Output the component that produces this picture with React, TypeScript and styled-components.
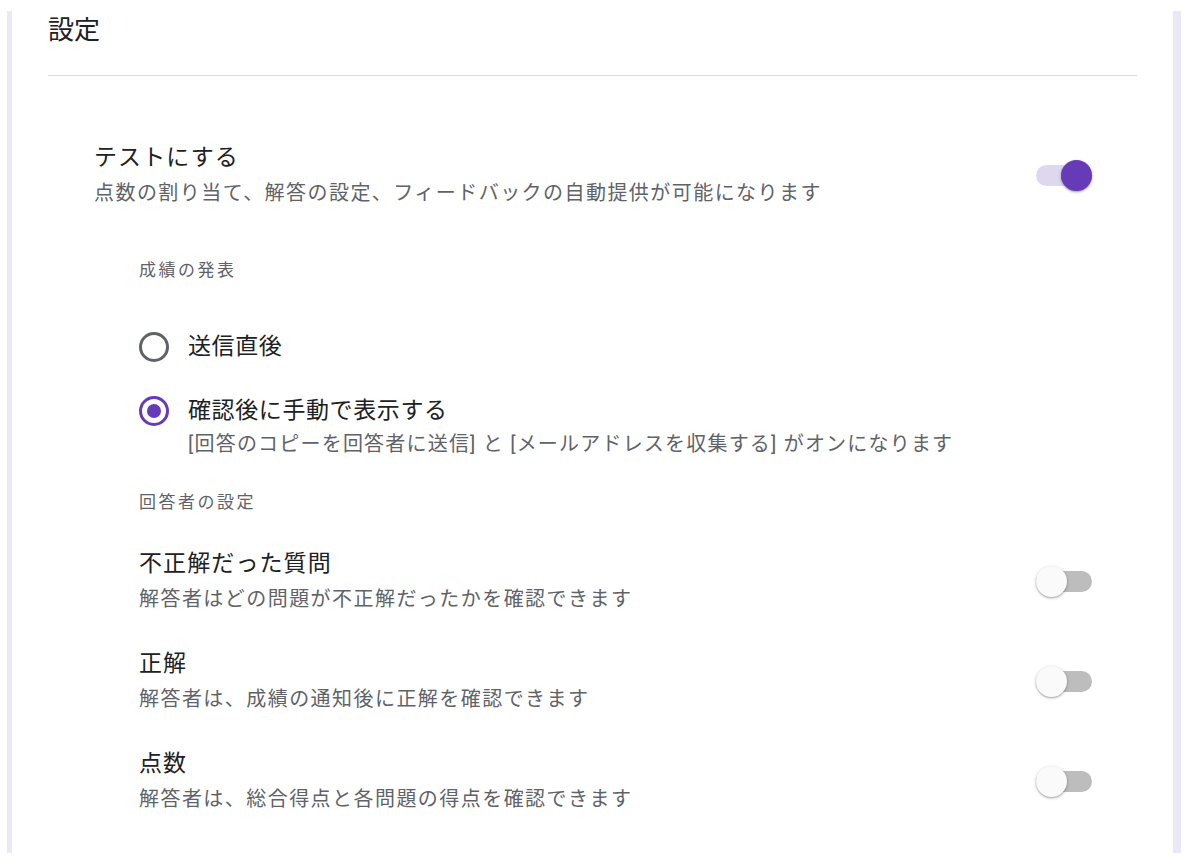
import { FC } from 'react';
import styled, { createGlobalStyle } from 'styled-components';

const GlobalStyle = createGlobalStyle`
    html, body {
        margin: 0;
        padding: 0;
        background: #ffffff;
    }
    body {
        font-family: Roboto, 'Noto Sans CJK JP', sans-serif;
        color: #202124;
    }
`;

const Card = styled.div`
    box-sizing: border-box;
    margin: 11px 0 0 7px;
    width: 1174px;
    height: 842px;
    border-left: 5px solid #ebe8f6;
    border-right: 8px solid #ebe8f6;
    background: #ffffff;
`;

const Header = styled.div`
    margin: 0 36px 0 36px;
    padding-bottom: 26px;
    border-bottom: 1px solid #dadce0;
`;

const Title = styled.div`
    font-size: 26px;
    line-height: 38px;
    color: #202124;
`;

const Body = styled.div`
    padding: 64px 81px 0 82px;
`;

const SettingRow = styled.div<{ $gap?: number }>`
    display: flex;
    align-items: center;
    justify-content: space-between;
    margin-top: ${p => p.$gap ?? 0}px;
`;

const TextBlock = styled.div`
    display: flex;
    flex-direction: column;
`;

const RowTitle = styled.div`
    font-size: 23px;
    line-height: 35px;
    color: #202124;
    letter-spacing: 1.1px;
`;

const RowDesc = styled.div`
    margin-top: 2px;
    font-size: 20px;
    line-height: 33px;
    color: #5f6368;
    letter-spacing: 1.45px;
`;

const SubGroup = styled.div`
    padding-left: 45px;
`;

const GroupLabel = styled.div<{ $gap: number }>`
    margin-top: ${p => p.$gap}px;
    font-size: 17px;
    line-height: 28px;
    color: #5f6368;
    letter-spacing: 2.5px;
`;

const RadioRow = styled.div<{ $gap: number }>`
    display: flex;
    align-items: flex-start;
    gap: 19px;
    margin-top: ${p => p.$gap}px;
`;

const RadioCircle = styled.div<{ $checked?: boolean }>`
    box-sizing: border-box;
    flex-shrink: 0;
    width: 30px;
    height: 30px;
    margin-top: 3px;
    border-radius: 50%;
    border: 3px solid ${p => (p.$checked ? '#673ab7' : '#5f6368')};
    display: flex;
    align-items: center;
    justify-content: center;

    &::after {
        content: '';
        display: ${p => (p.$checked ? 'block' : 'none')};
        width: 14px;
        height: 14px;
        border-radius: 50%;
        background: #673ab7;
    }
`;

const RadioLabel = styled.div`
    font-size: 23px;
    line-height: 36px;
    color: #202124;
    letter-spacing: 0.6px;
`;

const RadioDesc = styled.div`
    font-size: 20px;
    line-height: 30px;
    color: #5f6368;
    letter-spacing: 1.2px;
`;

const Track = styled.div<{ $on?: boolean }>`
    position: relative;
    flex-shrink: 0;
    width: 56px;
    height: 21px;
    border-radius: 11px;
    background: ${p => (p.$on ? '#ddd8ee' : '#bdbdbd')};
`;

const Thumb = styled.div<{ $on?: boolean }>`
    position: absolute;
    top: -5px;
    left: ${p => (p.$on ? '25px' : '0')};
    width: 31px;
    height: 31px;
    border-radius: 50%;
    background: ${p => (p.$on ? '#673ab7' : '#fafafa')};
    box-shadow: 0 1px 3px rgba(0, 0, 0, 0.3), 0 1px 1px rgba(0, 0, 0, 0.12);
`;

const Toggle: FC<{ on?: boolean }> = ({ on }) => (
    <Track $on={on}>
        <Thumb $on={on} />
    </Track>
);

const Setting: FC<{ title: string; desc: string; on?: boolean; gap?: number }> = ({
    title,
    desc,
    on,
    gap
}) => (
    <SettingRow $gap={gap}>
        <TextBlock>
            <RowTitle>{title}</RowTitle>
            <RowDesc>{desc}</RowDesc>
        </TextBlock>
        <Toggle on={on} />
    </SettingRow>
);

export default function App() {
    return (
        <>
            <GlobalStyle />
            <Card>
                <Header>
                    <Title>設定</Title>
                </Header>
                <Body>
                    <Setting
                        title="テストにする"
                        desc="点数の割り当て、解答の設定、フィードバックの自動提供が可能になります"
                        on
                    />
                    <SubGroup>
                        <GroupLabel $gap={46}>成績の発表</GroupLabel>
                        <RadioRow $gap={45}>
                            <RadioCircle />
                            <TextBlock>
                                <RadioLabel>送信直後</RadioLabel>
                            </TextBlock>
                        </RadioRow>
                        <RadioRow $gap={28}>
                            <RadioCircle $checked />
                            <TextBlock>
                                <RadioLabel>確認後に手動で表示する</RadioLabel>
                                <RadioDesc>
                                    [回答のコピーを回答者に送信] と [メールアドレスを収集する] がオンになります
                                </RadioDesc>
                            </TextBlock>
                        </RadioRow>
                        <GroupLabel $gap={29}>回答者の設定</GroupLabel>
                        <Setting
                            gap={30}
                            title="不正解だった質問"
                            desc="解答者はどの問題が不正解だったかを確認できます"
                        />
                        <Setting
                            gap={30}
                            title="正解"
                            desc="解答者は、成績の通知後に正解を確認できます"
                        />
                        <Setting
                            gap={30}
                            title="点数"
                            desc="解答者は、総合得点と各問題の得点を確認できます"
                        />
                    </SubGroup>
                </Body>
            </Card>
        </>
    );
}
